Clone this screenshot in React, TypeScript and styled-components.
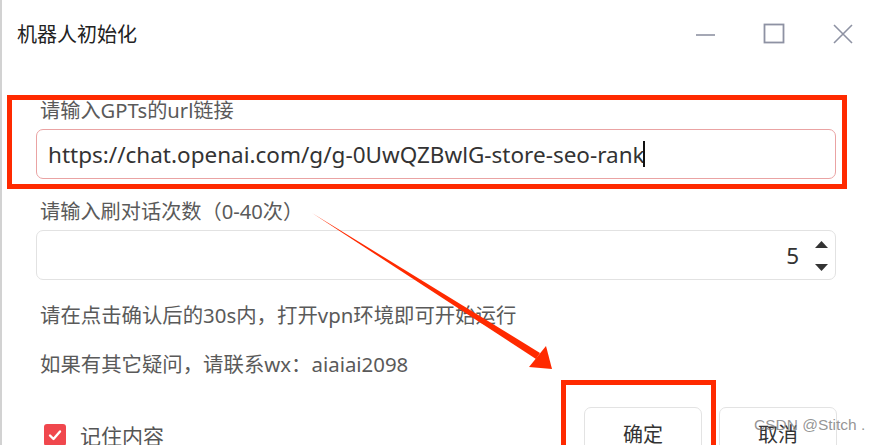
import styled, { createGlobalStyle } from 'styled-components'

const GlobalStyle = createGlobalStyle`
	html, body {
		margin: 0;
		padding: 0;
		background: #ffffff;
	}
	body {
		font-family: 'Noto Sans', 'Noto Sans CJK SC', sans-serif;
	}
`

const cjk = `'Noto Sans', 'Noto Sans CJK SC', sans-serif`

export default function App() {
	return (
		<>
			<GlobalStyle />
			<Frame>
				<TitleBar>
					<Title>机器人初始化</Title>
					<Controls>
						<WinButton aria-label='minimize'>
							<svg width='22' height='22' viewBox='0 0 22 22'>
								<line x1='2' y1='12' x2='21' y2='12' stroke='#8e92a3' strokeWidth='1.6' />
							</svg>
						</WinButton>
						<WinButton aria-label='maximize'>
							<svg width='22' height='22' viewBox='0 0 22 22'>
								<rect x='1.5' y='1.5' width='19' height='18' fill='none' stroke='#8e92a3' strokeWidth='1.8' />
							</svg>
						</WinButton>
						<WinButton aria-label='close'>
							<svg width='22' height='22' viewBox='0 0 22 22'>
								<path d='M2 2 L20 20 M20 2 L2 20' stroke='#8e92a3' strokeWidth='1.6' />
							</svg>
						</WinButton>
					</Controls>
				</TitleBar>

				<Body>
					<Field>
						<Label>请输入GPTs的url链接</Label>
						<InputBox $tone='focus'>
							<Value>https://chat.openai.com/g/g-0UwQZBwlG-store-seo-rank</Value>
							<Caret />
						</InputBox>
					</Field>

					<Field $gap={20}>
						<Label>请输入刷对话次数（0-40次）</Label>
						<InputBox $tone='plain' $align='end'>
							<Value>5</Value>
							<Spinner>
								<svg width='13' height='8' viewBox='0 0 13 8'>
									<polygon points='0,7 13,7 6.5,0' fill='#333' />
								</svg>
								<svg width='13' height='8' viewBox='0 0 13 8'>
									<polygon points='0,0 13,0 6.5,7' fill='#333' />
								</svg>
							</Spinner>
						</InputBox>
					</Field>

					<Info $top={23}>请在点击确认后的30s内，打开vpn环境即可开始运行</Info>
					<Info $top={25}>如果有其它疑问，请联系wx：aiaiai2098</Info>

					<Footer>
						<Remember>
							<Check>
								<svg width='16' height='16' viewBox='0 0 16 16'>
									<path d='M3 8.5 L6.5 12 L13 4.5' fill='none' stroke='#fff' strokeWidth='2.4' strokeLinecap='round' strokeLinejoin='round' />
								</svg>
							</Check>
							<RememberText>记住内容</RememberText>
						</Remember>
						<Buttons>
							<Button>确定</Button>
							<Button>取消</Button>
						</Buttons>
					</Footer>
				</Body>

				<Annotation $x={7} $y={95} $w={840} $h={94} />
				<Annotation $x={561} $y={380} $w={155} $h={70} />
				<ArrowLayer width='882' height='445' viewBox='0 0 882 445'>
					<polygon points='312,213 540,353 536,359' fill='#ff2a00' />
					<polygon points='529,367 546,346 552,369' fill='#ff2a00' />
				</ArrowLayer>
				<Watermark>CSDN @Stitch .</Watermark>
			</Frame>
		</>
	)
}

const Frame = styled.div`
	position: relative;
	box-sizing: border-box;
	width: 882px;
	height: 445px;
	overflow: hidden;
	background: #fff;
	border-left: 2px solid #d2d2d2;
`

const TitleBar = styled.div`
	display: flex;
	align-items: center;
	justify-content: space-between;
	height: 68px;
	padding-left: 15px;
	padding-right: 5px;
`

const Title = styled.div`
	font-family: ${cjk};
	font-size: 20px;
	color: #222;
	line-height: 24px;
	padding-top: 2px;
`

const Controls = styled.div`
	display: flex;
	align-items: center;
`

const WinButton = styled.div`
	display: flex;
	align-items: center;
	justify-content: center;
	width: 69px;
	height: 68px;
`

const Body = styled.div`
	display: flex;
	flex-direction: column;
	padding: 30px 46px 0 34px;
`

const Field = styled.div<{ $gap?: number }>`
	display: flex;
	flex-direction: column;
	gap: 7px;
	margin-top: ${p => p.$gap ?? 0}px;
`

const Label = styled.div`
	font-family: ${cjk};
	font-size: 20.2px;
	line-height: 24px;
	color: #5a5a5a;
	padding-left: 4px;
`

const InputBox = styled.div<{ $tone: 'focus' | 'plain'; $align?: 'start' | 'end' }>`
	box-sizing: border-box;
	display: flex;
	align-items: center;
	justify-content: ${p => (p.$align === 'end' ? 'flex-end' : 'flex-start')};
	gap: ${p => (p.$align === 'end' ? '16px' : '0')};
	height: 50px;
	padding: ${p => (p.$align === 'end' ? '0 7px 0 0' : '0 0 0 11px')};
	border: 1px solid ${p => (p.$tone === 'focus' ? '#eaa3a3' : '#e2e2e2')};
	border-radius: 7px;
	background: #fff;
`

const Value = styled.span`
	font-family: ${cjk};
	font-size: 22.5px;
	color: #333;
	white-space: nowrap;
`

const Caret = styled.span`
	display: inline-block;
	width: 2px;
	height: 26px;
	background: #111;
	margin-left: -2px;
`

const Spinner = styled.div`
	display: flex;
	flex-direction: column;
	gap: 15px;
	margin-top: 3px;
`

const Info = styled.div<{ $top: number }>`
	font-family: ${cjk};
	font-size: 20.4px;
	line-height: 24px;
	color: #5a5a5a;
	padding-left: 4px;
	margin-top: ${p => p.$top}px;
`

const Footer = styled.div`
	display: flex;
	align-items: center;
	justify-content: space-between;
	margin-top: 31px;
	height: 52px;
	padding-left: 8px;
`

const Remember = styled.div`
	display: flex;
	align-items: center;
	gap: 14px;
	padding-top: 3px;
`

const Check = styled.div`
	display: flex;
	align-items: center;
	justify-content: center;
	width: 22px;
	height: 22px;
	border-radius: 3px;
	background: #f0474d;
`

const RememberText = styled.span`
	font-family: ${cjk};
	font-size: 21px;
	color: #555;
`

const Buttons = styled.div`
	display: flex;
	gap: 17px;
	margin-right: -1px;
`

const Button = styled.div`
	box-sizing: border-box;
	display: flex;
	align-items: center;
	justify-content: center;
	width: 118px;
	height: 52px;
	border: 1px solid #e3e3e3;
	border-radius: 7px;
	font-family: ${cjk};
	font-size: 20px;
	color: #333;
	background: #fff;
`

const Annotation = styled.div<{ $x: number; $y: number; $w: number; $h: number }>`
	position: absolute;
	box-sizing: border-box;
	left: ${p => p.$x - 2}px;
	top: ${p => p.$y}px;
	width: ${p => p.$w}px;
	height: ${p => p.$h}px;
	border: 5px solid #ff2a00;
	pointer-events: none;
`

const ArrowLayer = styled.svg`
	position: absolute;
	left: -2px;
	top: 0;
	pointer-events: none;
`

const Watermark = styled.div`
	position: absolute;
	left: 752px;
	top: 416px;
	font-family: 'Liberation Sans', sans-serif;
	font-size: 15.5px;
	color: rgba(130, 130, 130, 0.85);
	white-space: nowrap;
`
